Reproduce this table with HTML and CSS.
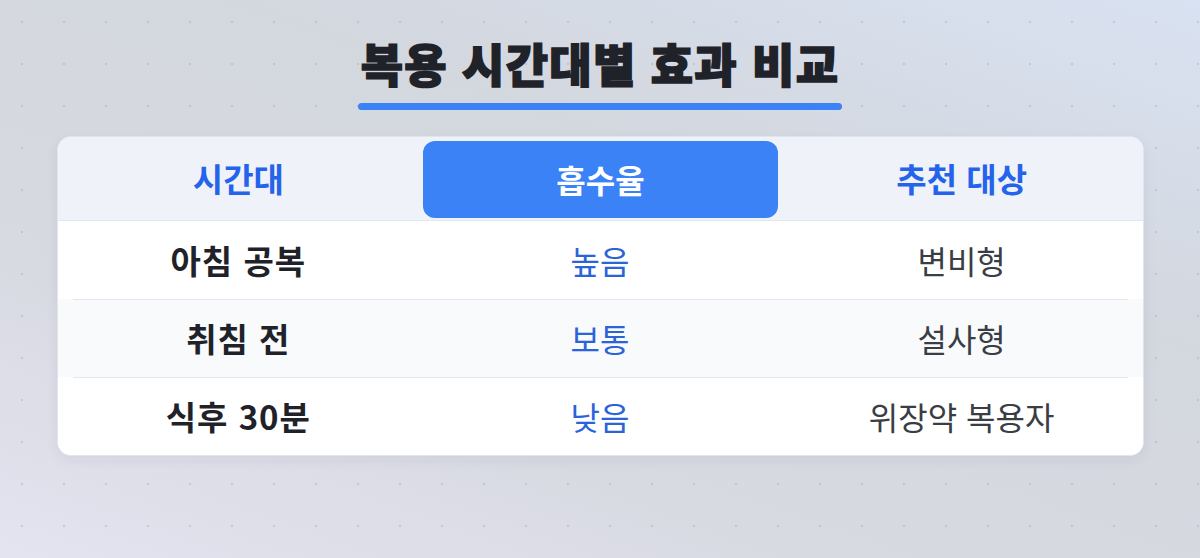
FILE: index.html
```html
<!DOCTYPE html>
<html lang="ko">
<head>
    <meta charset="UTF-8">
    <meta name="viewport" content="width=device-width, initial-scale=1.0">
    <title>복용 시간대별 효과 비교</title>
    <link rel="stylesheet" href="styles.css">
</head>
<body>
    <div class="page">
        <h1 class="title">복용 시간대별 효과 비교</h1>

        <div class="compare">
            <div class="head">
                <div class="head-cell">시간대</div>
                <div class="head-cell active">흡수율</div>
                <div class="head-cell">추천 대상</div>
            </div>
            <div class="row">
                <div class="cell time">아침 공복</div>
                <div class="cell rate">높음</div>
                <div class="cell target">변비형</div>
            </div>
            <div class="row alt">
                <div class="cell time">취침 전</div>
                <div class="cell rate">보통</div>
                <div class="cell target">설사형</div>
            </div>
            <div class="row">
                <div class="cell time">식후 30분</div>
                <div class="cell rate">낮음</div>
                <div class="cell target">위장약 복용자</div>
            </div>
        </div>
    </div>
</body>
</html>
```

FILE: styles.css
```css
html, body {
    margin: 0;
    height: 100%;
}
body {
    font-family: "Noto Sans CJK KR", "Noto Sans", sans-serif;
    color: #1f2329;
    background-color: #d6d9e0;
    background-image:
        radial-gradient(circle, rgba(150, 158, 180, 0.35) 1px, transparent 1.6px),
        linear-gradient(200deg, #d9e2f2 0%, #d3d7de 35%, #d8dae2 70%, #e4e3f0 100%);
    background-size: 42px 42px, 100% 100%;
    background-position: 1px 1px, 0 0;
}
.page {
    display: flex;
    flex-direction: column;
    align-items: center;
    padding-top: 34px;
}
.title {
    margin: 0;
    font-size: 46px;
    font-weight: 900;
    line-height: 1.25;
    letter-spacing: 1.3px;
    color: #1f2229;
    -webkit-text-stroke: 1.5px #1f2229;
}
.title::after {
    content: "";
    display: block;
    height: 7px;
    margin: 11px -3px 0;
    border-radius: 4px;
    background: #3b82f6;
}
.compare {
    width: 1085px;
    margin-top: 26px;
    background: #fff;
    border: 1px solid #e1e5ec;
    border-radius: 14px;
    overflow: hidden;
    box-shadow: 0 4px 14px rgba(30, 40, 70, 0.06);
}
.head {
    display: grid;
    grid-template-columns: repeat(3, 1fr);
    background: #eff3f9;
    border-bottom: 1px solid #e2e7ee;
}
.head-cell {
    height: 83px;
    display: flex;
    align-items: center;
    justify-content: center;
    font-size: 33px;
    font-weight: 700;
    color: #2563eb;
}
.head-cell.active {
    height: 77px;
    margin: 4px 3px 2px 4px;
    border-radius: 12px;
    background: #3b82f6;
    color: #fff;
    font-size: 32px;
}
.row {
    display: grid;
    grid-template-columns: repeat(3, 1fr);
    height: 78px;
    background: linear-gradient(#e4e8ee, #e4e8ee) 15px 0 / calc(100% - 30px) 1px no-repeat, #fff;
}
.row:nth-child(2) {
    background: #fff;
}
.row.alt {
    background: linear-gradient(#e4e8ee, #e4e8ee) 15px 0 / calc(100% - 30px) 1px no-repeat, #f8fafc;
}
.cell {
    display: flex;
    align-items: center;
    justify-content: center;
    font-size: 32px;
}
.time {
    font-size: 33px;
    letter-spacing: 1px;
    font-weight: 700;
    color: #1f2329;
}
.rate {
    color: #2b63d9;
}
.target {
    color: #3a3d44;
}
```
